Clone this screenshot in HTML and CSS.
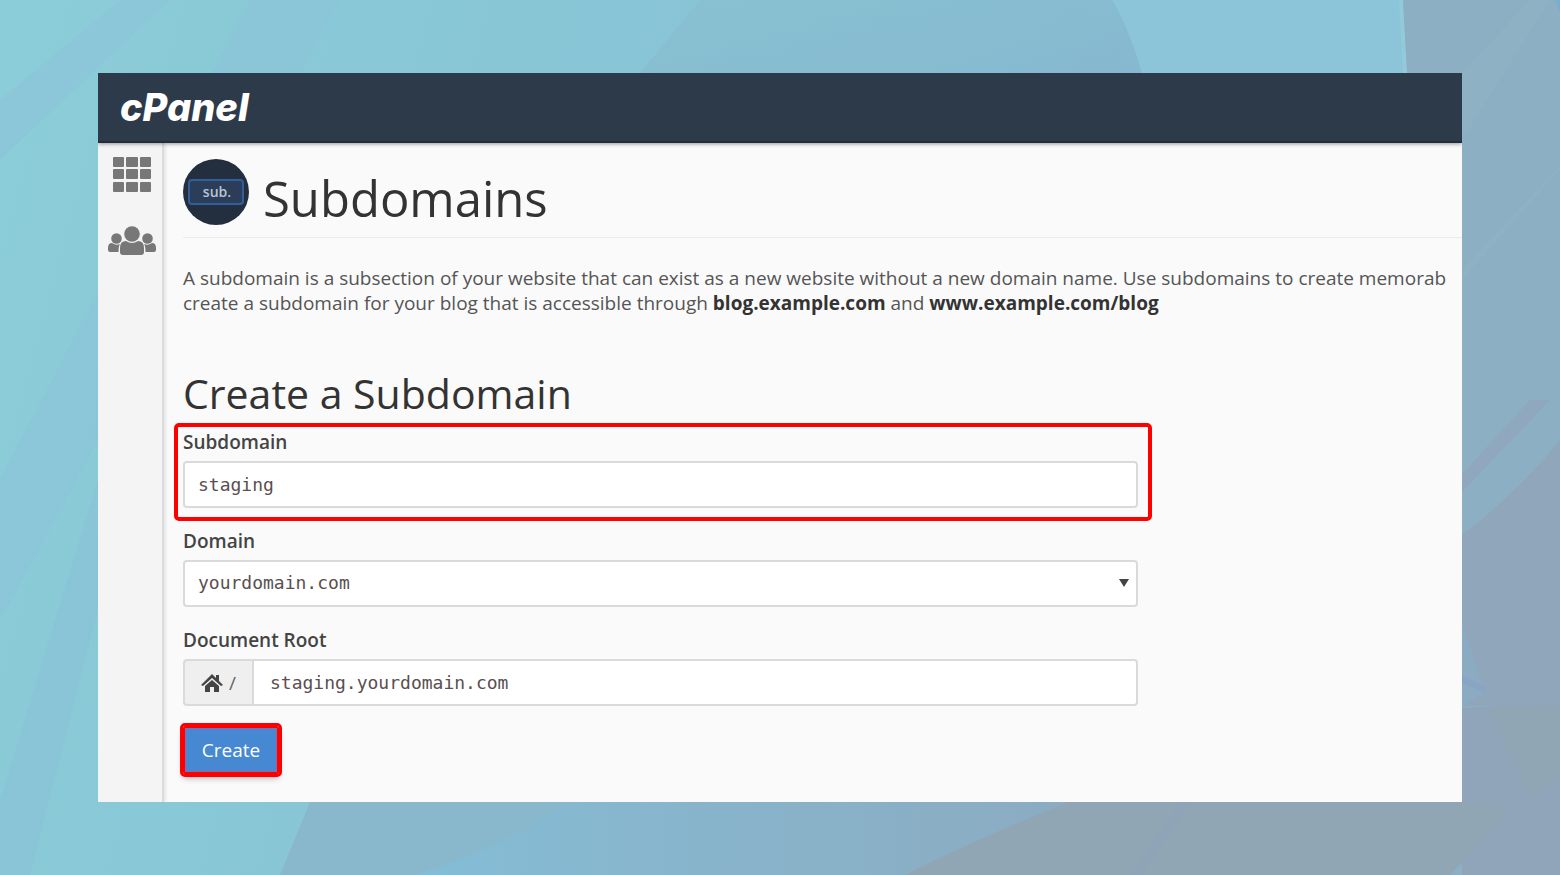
FILE: index.html
```html
<!DOCTYPE html>
<html lang="en">
<head>
  <meta charset="UTF-8" />
  <meta name="viewport" content="width=device-width, initial-scale=1" />
  <title>Subdomains</title>
  <link rel="stylesheet" href="styles.css">
</head>
<body>

<!-- ========== Backdrop ========== -->
<svg class="backdrop" viewBox="0 0 1560 875" preserveAspectRatio="none" aria-hidden="true">
  <defs>
    <linearGradient id="fadeBottom">
      <stop offset="0" stop-color="#84bdd6"/>
      <stop offset=".5" stop-color="#88b3ca"/>
      <stop offset="1" stop-color="#8bacc2"/>
    </linearGradient>
    <linearGradient id="fadeTop" x2="1" y2="1">
      <stop offset="0" stop-color="#88bfce"/>
      <stop offset="1" stop-color="#86b5cd"/>
    </linearGradient>
  </defs>
  <path d="M0 100L120 0H170L0 160Z" fill="#8cc5d8" opacity=".7"/>
  <path d="M0 480L250 0H340L0 620Z" fill="#8bc4d8" opacity=".7"/>
  <path d="M0 800L98 480V610L30 875H0Z" fill="#88c2d6" opacity=".6"/>
  <path d="M700 0H1112Q1130 30 1142 73H640Z" fill="url(#fadeTop)" opacity=".6"/>
  <path d="M1112 0H1403L1407 73H1142Q1130 30 1112 0Z" fill="#8cc4d9"/>
  <path d="M1399 0H1403L1407 73H1403Z" fill="#92cadc"/>
  <path d="M1403 0H1560V875H1462V73H1407Z" fill="#8cafc4"/>
  <path d="M1462 73L1530 0H1550L1462 140Z" fill="#8fb3c3" opacity=".7"/>
  <path d="M1462 270L1560 165V170L1462 280Z" fill="#8db2c3"/>
  <path d="M1462 430L1560 310V370L1462 475Z" fill="#8cafc3"/>
  <path d="M1462 474L1530 400H1550L1462 492Z" fill="#8fa8bd"/>
  <path d="M1462 535Q1520 490 1560 440V706H1462Z" fill="#90a6bb"/>
  <path d="M1462 622Q1474 660 1485 692L1462 706Z" fill="#8babc2"/>
  <path d="M1462 675L1485 687V693L1462 683Z" fill="#89a4c5"/>
  <path d="M1462 708Q1510 704 1560 706V875H1462Z" fill="#91a5ba"/>
  <path d="M1490 708L1560 706V777L1530 797Q1508 750 1495 720Z" fill="#91a6b4"/>
  <path d="M280 875L310 802H567Q530 850 415 875Z" fill="#89b7cb"/>
  <path d="M415 875Q515 842 567 802H1068L905 875Z" fill="url(#fadeBottom)"/>
  <path d="M905 875Q970 842 1068 802H1490L1510 812L1450 875Z" fill="#91a6b5"/>
  <path d="M1130 875L1180 802H1192L1142 875Z" fill="#90a4ba" opacity=".6"/>
  <path d="M1555 0H1560V12Z" fill="#79add4"/>
</svg>

<div class="window">
  <header class="topbar">
    <a class="logo" href="#">cPanel</a>
  </header>

  <div class="layout">
    <!-- ========== Sidebar ========== -->
    <nav class="sidebar">
      <a href="#" aria-label="Home">
        <svg class="icon-grid" viewBox="0 0 40 36">
          <rect x="1" y="0" width="11" height="10" rx="1"/>
          <rect x="14" y="0" width="12" height="10" rx="1"/>
          <rect x="28" y="0" width="11" height="10" rx="1"/>
          <rect x="1" y="12" width="11" height="10" rx="1"/>
          <rect x="14" y="12" width="12" height="10" rx="1"/>
          <rect x="28" y="12" width="11" height="10" rx="1"/>
          <rect x="1" y="25" width="11" height="10" rx="1"/>
          <rect x="14" y="25" width="12" height="10" rx="1"/>
          <rect x="28" y="25" width="11" height="10" rx="1"/>
        </svg>
      </a>
      <a href="#" aria-label="User Manager">
        <svg class="icon-users" viewBox="0 0 48 30">
          <circle cx="24" cy="8" r="7.8"/>
          <path d="M12 26V22Q12 15 18 15Q24 19 30 15Q36 15 36 22V26Q36 29 33 29H15Q12 29 12 26Z"/>
          <circle cx="8.500" cy="12.500" r="5.300"/>
          <circle cx="39.500" cy="12.500" r="5.300"/>
          <path d="M0 24V22Q0 17 4 17Q8 20 12 18Q10.500 20 10.500 26H2Q0 26 0 24Z"/>
          <path d="M48 24V22Q48 17 44 17Q40 20 36 18Q37.500 20 37.500 26H46Q48 26 48 24Z"/>
        </svg>
      </a>
    </nav>

    <!-- ========== Content ========== -->
    <main class="content">
      <div class="page-header">
        <div class="badge"><span>sub.</span></div>
        <h1>Subdomains</h1>
      </div>

      <p class="description">A subdomain is a subsection of your website that can exist as a new website without a new domain name. Use subdomains to create memorab<br>
      create a subdomain for your blog that is accessible through <strong>blog.example.com</strong> and <strong>www.example.com/blog</strong></p>

      <h2>Create a Subdomain</h2>

      <form class="form" autocomplete="off">
        <div class="field marked">
          <label for="subdomain">Subdomain</label>
          <input class="control" type="text" id="subdomain" value="staging">
        </div>

        <div class="field">
          <label for="domain">Domain</label>
          <div class="select-wrap">
            <select class="control" id="domain">
              <option selected>yourdomain.com</option>
            </select>
          </div>
        </div>

        <div class="field">
          <label for="docroot">Document Root</label>
          <div class="input-group">
            <span class="addon">
              <svg class="icon-home" viewBox="0 0 22 18">
                <path d="M11 0L15 4V1H18V7L22 11L20 12L11 4L2 12L0 11Z"/>
                <path d="M11 6L18 12V18H13V13H9V18H4V12Z"/>
              </svg>
              /
            </span>
            <input class="control" type="text" id="docroot" value="staging.yourdomain.com">
          </div>
        </div>

        <button type="button" class="btn-create">Create</button>
      </form>
    </main>
  </div>
</div>

</body>
</html>
```

FILE: styles.css
```css
:root {
  --navy:#2c3a49; --red:#ff0000; --blue:#4688d2;
  --line:#dadada; --icon:#777; --text:#333;
}
*{box-sizing:border-box}
body{
  position:relative;margin:0;padding:73px 98px;min-height:100vh;color:var(--text);
  font-family:"Open Sans", sans-serif;
  background:linear-gradient(105deg,#8bcdd8 0%,#88c6d6 30%,#87bfd4 60%,#8eabc0 100%);
}
.backdrop{position:absolute;inset:0;width:100%;height:100%;z-index:-1}

/* ---------- Window ---------- */
.window{background:#fafafa;overflow:hidden}
.topbar{
  position:relative;display:flex;align-items:center;height:70px;padding:0 22px;
  background:var(--navy);border-bottom:2px solid #222e3c;box-shadow:0 1px 4px rgba(0,0,0,.4);
}
.logo{
  font:italic 800 38px/40px Inter, sans-serif;color:#fff;text-decoration:none;
}
.layout{display:flex}

/* ---------- Sidebar ---------- */
.sidebar{
  display:flex;flex-direction:column;align-items:center;gap:33px;flex:none;
  width:66px;padding:14px 0 0 4px;background:#f4f4f4;
  border-right:2px solid #dcdcdc;box-shadow:1px 0 4px rgba(0,0,0,.12);
}
.sidebar a{display:block}
.sidebar svg{display:block;fill:var(--icon)}
.icon-grid{width:40px;height:36px}
.icon-users{width:48px;height:30px}

/* ---------- Content ---------- */
.content{flex:1;min-width:0;padding:16px 0 28px 19px}
.page-header{
  display:flex;align-items:flex-end;gap:14px;padding-bottom:12px;border-bottom:1px solid #ececec;
}
.badge{
  display:flex;align-items:center;justify-content:center;width:66px;height:66px;
  border-radius:50%;background:#232f3e;
}
.badge span{
  width:56px;padding:0 0 0 2px;border:2px solid #2f609c;border-radius:4px;background:#2b3d58;
  color:#b9c4d2;font-size:14px;font-weight:600;line-height:22px;text-align:center;
}
h1,h2{margin:0;font-weight:400}
h1{font-size:49px;line-height:54px}
h2{margin:49px 0 8px;font-size:41px;line-height:56px}
.description{
  margin:28px 0 0;color:#555;font-size:19px;line-height:25px;white-space:nowrap;overflow:hidden;
}
.description strong{color:var(--text)}

/* ---------- Form ---------- */
.form{max-width:955px}
.field{position:relative;margin-bottom:20px}
.field label{display:block;margin-bottom:6px;color:#444;font-size:19px;font-weight:600;line-height:26px}
.control{
  display:block;width:100%;height:47px;padding:0 13px;border:2px solid var(--line);
  border-radius:4px;background:#fff;color:#5a5050;font-family:"DejaVu Sans Mono", monospace;
  font-size:18px;appearance:none;
}
.select-wrap{position:relative}
.select-wrap::after{
  content:"";position:absolute;right:9px;top:19px;pointer-events:none;
  border:5px solid transparent;border-top:8px solid #444;border-bottom:0;
}
select.control{padding-bottom:3px}
.input-group{display:flex}
.addon{
  display:flex;align-items:center;justify-content:center;gap:6px;flex:none;width:69px;
  border:2px solid var(--line);border-right:0;border-radius:4px 0 0 4px;
  background:#efefef;color:#666;font-size:19px;
}
.icon-home{width:22px;height:18px;fill:#444}
.input-group .control{flex:1;padding:0 16px;border-radius:0 4px 4px 0}

/* red frame round the field to fill in */
.marked::after{
  content:"";position:absolute;inset:-6px -14px -13px -9px;pointer-events:none;
  border:4px solid var(--red);border-radius:5px;
}
.btn-create{
  display:block;width:96px;height:48px;padding:0;border:2px solid var(--red);border-radius:2px;
  outline:3px solid var(--red);background:var(--blue);box-shadow:inset 0 0 0 1px #8a6aae,0 4px 6px rgba(0,0,0,.3);
  color:#fff;font-family:inherit;font-size:19px;cursor:pointer;
}
```
